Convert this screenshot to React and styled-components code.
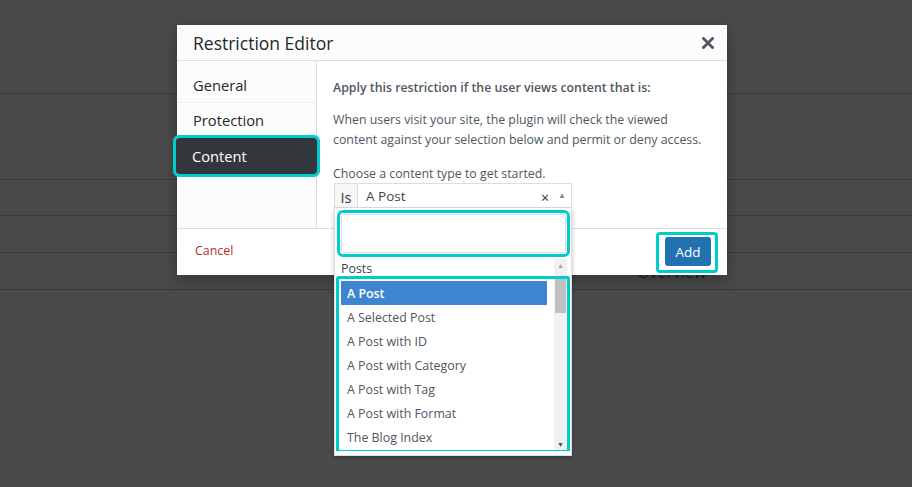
import styled, { createGlobalStyle } from 'styled-components';

const GlobalStyle = createGlobalStyle`
  * { box-sizing: border-box; }
  body {
    margin: 0;
    background: #4a4a4a;
    font-family: "Open Sans", "Noto Sans", sans-serif;
  }
`;

const options = [
  'A Post',
  'A Selected Post',
  'A Post with ID',
  'A Post with Category',
  'A Post with Tag',
  'A Post with Format',
  'The Blog Index',
];

const rows = [
  { height: 94 },
  { height: 86 },
  { height: 36 },
  { height: 37 },
  { height: 37, label: 'Overview' },
  { height: 197 },
];

export default function App() {
  return (
    <>
      <GlobalStyle />
      <Page>
        <Backdrop>
          {rows.map((row, i) => (
            <BgRow key={i} $height={row.height} $last={i === rows.length - 1}>
              <span />
              <BgLabel>{row.label}</BgLabel>
            </BgRow>
          ))}
        </Backdrop>

        <Modal>
          <Header>
            <Title>Restriction Editor</Title>
            <CloseButton aria-label="Close">
              <svg width="12" height="12" viewBox="0 0 12 12">
                <path d="M1.5 1.5 L10.5 10.5 M10.5 1.5 L1.5 10.5" stroke="#50575e" strokeWidth="2.8" strokeLinecap="square" />
              </svg>
            </CloseButton>
          </Header>

          <Body>
            <Sidebar>
              <Tab>General</Tab>
              <Tab>Protection</Tab>
              <Tab $active>Content</Tab>
            </Sidebar>

            <Content>
              <Lead>Apply this restriction if the user views content that is:</Lead>
              <Text>
                When users visit your site, the plugin will check the viewed
                <br />
                content against your selection below and permit or deny access.
              </Text>
              <Prompt>Choose a content type to get started.</Prompt>

              <SelectWrap>
                <Select>
                  <Operator>Is</Operator>
                  <Value>A Post</Value>
                  <Clear>×</Clear>
                  <Caret>▲</Caret>
                </Select>

                <Dropdown>
                  <SearchArea>
                    <Search />
                  </SearchArea>
                  <Results>
                    <ResultList>
                      <GroupLabel>Posts</GroupLabel>
                      {options.map((opt, i) => (
                        <Option key={opt} $selected={i === 0}>{opt}</Option>
                      ))}
                    </ResultList>
                    <Scrollbar>
                      <ScrollArrow>▲</ScrollArrow>
                      <Track>
                        <Thumb />
                      </Track>
                      <ScrollArrow>▼</ScrollArrow>
                    </Scrollbar>
                    <ListHighlight />
                  </Results>
                </Dropdown>
              </SelectWrap>
            </Content>
          </Body>

          <Footer>
            <Cancel>Cancel</Cancel>
            <AddHighlight>
              <AddButton>Add</AddButton>
            </AddHighlight>
          </Footer>
        </Modal>
      </Page>
    </>
  );
}

const cyan = '#00cccc';

const Page = styled.div`
  position: relative;
  width: 912px;
  height: 487px;
  overflow: hidden;
  background: #4a4a4a;
`;

const Backdrop = styled.div`
  display: flex;
  flex-direction: column;
`;

const BgRow = styled.div`
  display: grid;
  grid-template-columns: 637px 1fr;
  align-items: center;
  height: ${(p) => p.$height}px;
  border-bottom: ${(p) => (p.$last ? 'none' : '1px solid #3a3a3a')};
`;

const BgLabel = styled.span`
  font-size: 16px;
  line-height: 20px;
  color: #1f1f1f;
  padding-top: 2px;
`;

const Modal = styled.div`
  position: absolute;
  left: 177px;
  top: 25px;
  width: 550px;
  background: #fff;
  box-shadow: 0 5px 15px rgba(0, 0, 0, 0.3);
  display: flex;
  flex-direction: column;
`;

const Header = styled.div`
  height: 36px;
  padding: 0 13px 0 16px;
  display: flex;
  align-items: center;
  justify-content: space-between;
  background: #fcfcfc;
  border-bottom: 1px solid #dddddd;
`;

const Title = styled.h1`
  margin: 0;
  font-size: 17.5px;
  font-weight: 400;
  color: #23282d;
`;

const CloseButton = styled.span`
  display: flex;
  align-items: center;
`;

const Body = styled.div`
  display: flex;
  height: 168px;
  border-bottom: 1px solid #dddddd;
`;

const Sidebar = styled.div`
  width: 140px;
  flex-shrink: 0;
  padding-top: 7px;
  background: #fcfcfc;
  border-right: 1px solid #dddddd;
  display: flex;
  flex-direction: column;
`;

const Tab = styled.div`
  height: ${(p) => (p.$active ? '36px' : '35px')};
  padding-left: 16px;
  display: flex;
  align-items: center;
  font-size: 14.7px;
  color: ${(p) => (p.$active ? '#ffffff' : '#23282d')};
  background: ${(p) => (p.$active ? '#32373c' : 'transparent')};
  border-bottom: ${(p) => (p.$active ? 'none' : '1px solid #eeeeee')};
  outline: ${(p) => (p.$active ? `3px solid ${cyan}` : 'none')};
  outline-offset: 0;
  border-radius: ${(p) => (p.$active ? '3px' : '0')};
  margin-left: ${(p) => (p.$active ? '-1px' : '0')};
  margin-right: ${(p) => (p.$active ? '-1px' : '0')};
`;

const Content = styled.div`
  flex: 1;
  padding: 17px 16px 0 16px;
  color: #50575e;
  font-size: 12.35px;
`;

const Lead = styled.p`
  margin: 0;
  line-height: 20px;
  font-weight: 600;
`;

const Text = styled.p`
  margin: 12px 0 0;
  line-height: 19.5px;
`;

const Prompt = styled.p`
  margin: 15px 0 0;
  line-height: 19px;
`;

const SelectWrap = styled.div`
  position: relative;
  width: 238px;
  margin-left: 1px;
`;

const Select = styled.div`
  height: 25px;
  display: flex;
  align-items: stretch;
  border: 1px solid #dddddd;
  background: #fff;
`;

const Operator = styled.span`
  width: 23px;
  display: flex;
  align-items: flex-end;
  justify-content: center;
  font-size: 14.5px;
  color: #32373c;
  background: #f6f6f6;
  border-right: 1px solid #dddddd;
`;

const Value = styled.span`
  flex: 1;
  display: flex;
  align-items: center;
  padding-left: 8px;
  padding-top: 1px;
  font-size: 13.5px;
  color: #444;
`;

const Clear = styled.span`
  display: flex;
  align-items: center;
  padding-top: 3px;
  font-size: 14px;
  color: #333;
  margin-right: 9px;
`;

const Caret = styled.span`
  display: flex;
  align-items: center;
  font-size: 8px;
  color: #888;
  margin-right: 5px;
  padding-bottom: 2px;
`;

const Dropdown = styled.div`
  position: absolute;
  left: 0;
  top: 100%;
  width: 238px;
  height: 248px;
  background: #fff;
  border: 1px solid #dddddd;
  border-top: none;
  box-shadow: 0 2px 4px rgba(0, 0, 0, 0.25);
  display: flex;
  flex-direction: column;
  padding-bottom: 4px;
`;

const SearchArea = styled.div`
  padding: 6px 5px 6px 6px;
`;

const Search = styled.div`
  height: 39px;
  border: 1px solid #dddddd;
  border-radius: 2px;
  outline: 3px solid ${cyan};
  outline-offset: 1px;
`;

const Results = styled.div`
  position: relative;
  flex: 1;
  display: flex;
  padding: 0 4px 0 6px;
  overflow: hidden;
`;

const ResultList = styled.div`
  flex: 1;
  display: flex;
  flex-direction: column;
`;

const GroupLabel = styled.div`
  height: 22px;
  flex-shrink: 0;
  padding-bottom: 4px;
  display: flex;
  align-items: center;
  font-size: 12.4px;
  font-weight: 500;
  color: #3c434a;
`;

const Option = styled.div`
  flex-shrink: 0;
  height: 24px;
  margin-right: 7px;
  padding-left: 6px;
  display: flex;
  align-items: center;
  font-size: 12.4px;
  font-weight: ${(p) => (p.$selected ? 600 : 400)};
  color: ${(p) => (p.$selected ? '#fff' : '#50575e')};
  background: ${(p) => (p.$selected ? '#3d85d1' : 'transparent')};
`;

const Scrollbar = styled.div`
  width: 13px;
  display: flex;
  flex-direction: column;
  background: #f1f1f1;
`;

const ScrollArrow = styled.span`
  height: 13px;
  display: flex;
  align-items: center;
  justify-content: center;
  font-size: 7px;
  color: #a3a3a3;
  &:last-child {
    color: #505050;
  }
`;

const Track = styled.div`
  flex: 1;
  padding: 5px 1px 0;
`;

const Thumb = styled.div`
  height: 36px;
  background: #c1c1c1;
`;

const ListHighlight = styled.div`
  position: absolute;
  left: 1px;
  top: 17px;
  width: 234px;
  height: 177px;
  border: 3px solid ${cyan};
  border-radius: 3px;
  pointer-events: none;
`;

const Footer = styled.div`
  height: 46px;
  padding: 0 9px 0 18px;
  display: flex;
  align-items: center;
  justify-content: space-between;
`;

const Cancel = styled.a`
  margin-bottom: 3px;
  font-size: 12.4px;
  color: #b32d2e;
`;

const AddHighlight = styled.span`
  display: flex;
  margin-top: 1px;
  padding: 2px 4px 4px 6px;
  border: 3px solid ${cyan};
  border-radius: 4px;
`;

const AddButton = styled.button`
  width: 46px;
  height: 29px;
  border: none;
  border-radius: 3px;
  background: #2271b1;
  color: #fff;
  font-family: inherit;
  font-size: 13.5px;
`;
